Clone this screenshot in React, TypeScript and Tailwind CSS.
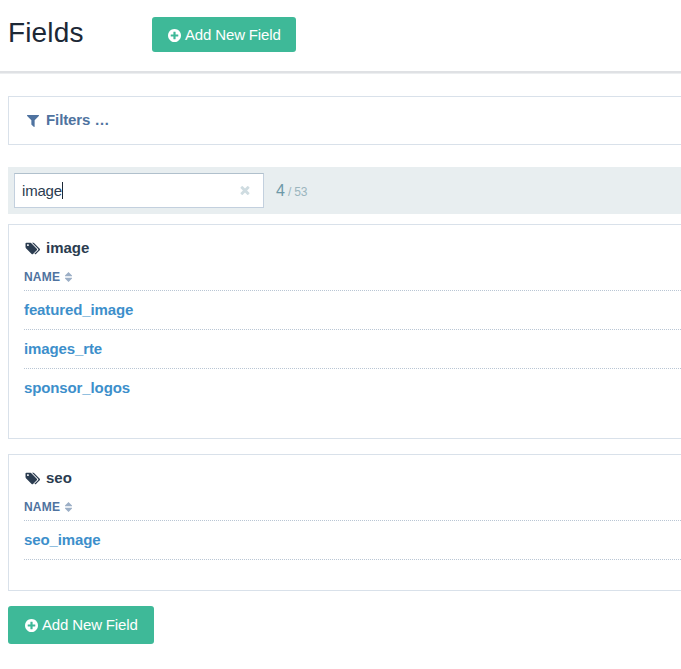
import React from "react";

const PLUS_CIRCLE =
  "M1344 960v-128q0-26-19-45t-45-19h-256v-256q0-26-19-45t-45-19h-128q-26 0-45 19t-19 45v256h-256q-26 0-45 19t-19 45v128q0 26 19 45t45 19h256v256q0 26 19 45t45 19h128q26 0 45-19t19-45v-256h256q26 0 45-19t19-45zm320-64q0 209-103 385.5t-279.5 279.5-385.5 103-385.5-103-279.5-279.5-103-385.5 103-385.5 279.5-279.5 385.5-103 385.5 103 279.5 279.5 103 385.5z";
const TIMES =
  "M1490 1322q0 40-28 68l-136 136q-28 28-68 28t-68-28l-294-294-294 294q-28 28-68 28t-68-28l-136-136q-28-28-28-68t28-68l294-294-294-294q-28-28-28-68t28-68l136-136q28-28 68-28t68 28l294 294 294-294q28-28 68-28t68 28l136 136q28 28 28 68t-28 68l-294 294 294 294q28 28 28 68z";
const FILTER =
  "M1595 295q17 41-14 70l-493 493v742q0 42-39 59-13 5-25 5-27 0-45-19l-256-256q-19-19-19-45v-486l-493-493q-31-29-14-70 17-39 59-39h1280q42 0 59 39z";
const TAGS =
  "M576 448q0-53-37.5-90.5t-90.5-37.5-90.5 37.5-37.5 90.5 37.5 90.5 90.5 37.5 90.5-37.5 37.5-90.5zm1067 576q0 53-37 90l-491 492q-39 37-91 37-53 0-90-37l-715-716q-38-37-64.5-101t-26.5-117v-416q0-52 38-90t90-38h416q53 0 117 26.5t102 64.5l715 714q37 39 37 91zm384 0q0 53-37 90l-491 492q-39 37-91 37-36 0-59-14t-53-45l470-470q37-37 37-90 0-52-37-91l-715-714q-38-38-102-64.5t-117-26.5h224q53 0 117 26.5t102 64.5l715 714q37 39 37 91z";

function Icon({ d, box, className }: { d: string; box: string; className: string }) {
  return (
    <svg viewBox={box} className={`shrink-0 ${className}`} fill="currentColor" aria-hidden="true">
      <path d={d} />
    </svg>
  );
}

function AddButton({ className }: { className: string }) {
  return (
    <button className={`flex items-center rounded-[3px] bg-[#3eb998] text-[15px] leading-[18px] text-white ${className}`}>
      <Icon d={PLUS_CIRCLE} box="128 128 1536 1536" className="mr-[4px] mt-px size-[13px]" />
      <span className="tracking-[-0.15px] whitespace-nowrap">Add New Field</span>
    </button>
  );
}

function FieldGroup({ tag, fields, className }: { tag: string; fields: string[]; className: string }) {
  return (
    <section className={`border-y border-l border-[#d9e1ea] pl-[15px] ${className}`}>
      <h2 className="flex h-[18px] items-center text-[15px] leading-[18px] font-bold text-[#2b3c50]">
        <Icon d={TAGS} box="64 128 1963 1536" className="mr-[6px] ml-px h-[13px] w-[15px]" />
        {tag}
      </h2>
      <div className="mt-[8px] flex h-[26px] items-center border-b border-dotted border-[#b9c6d4] pb-px text-[12px] font-bold tracking-[0.2px] text-[#4f73a0]">
        NAME
        <svg viewBox="0 0 7 10" className="ml-[5px] h-[10px] w-[7px]" fill="#9cafc6" aria-hidden="true">
          <path d="M3.5 0 7 3.6v.6H0v-.6zM0 5.8h7v.6L3.5 10 0 6.4z" />
        </svg>
      </div>
      {fields.map((field) => (
        <div
          key={field}
          className="flex h-[39px] items-center border-b border-dotted border-[#b9c6d4] text-[15px] font-bold tracking-[-0.12px] text-[#3d8fcb] last:[&:nth-child(5)]:border-transparent"
        >
          <a>{field}</a>
        </div>
      ))}
    </section>
  );
}

export default function App() {
  return (
    <main className="h-[669px] w-full overflow-hidden bg-white font-['Liberation_Sans',Arial,sans-serif]">
      <header className="border-b border-[#eceef0]">
        <div className="flex h-[73px] items-start border-b-2 border-[#dfe1e4] pl-[8px]">
          <h1 className="mt-[16px] w-[144px] text-[28px] leading-[34px] tracking-[0.15px] text-[#1c2836]">Fields</h1>
          <AddButton className="mt-[17px] h-[35px] w-[144px] pl-[16px]" />
        </div>
      </header>

      <div className="pl-[8px]">
        <section className="mt-[22px] flex h-[49px] items-center border-y border-l border-[#d9e1ea] pl-[18px] text-[15px] font-bold text-[#4f73a0]">
          <Icon d={FILTER} box="192 256 1408 1408" className="mt-px mr-[7px] size-[12px]" />
          <span className="tracking-[-0.1px]">Filters …</span>
        </section>

        <section className="mt-[22px] flex h-[47px] items-center bg-[#e8eef0] pl-[6px]">
          <div className="flex h-[35px] w-[250px] items-center border border-[#c3d0de] border-t-[#b0c0cc] bg-white pl-[7px] text-[15px] text-[#2b3c50]">
            <span className="pt-px tracking-[-0.2px]">image</span>
            <span className="h-[17px] w-px bg-[#1c2836]" />
            <Icon d={TIMES} box="302 238 1188 1316" className="mr-[13px] mb-px ml-auto h-[10px] w-[10px] text-[#cfdce1]" />
          </div>
          <div className="ml-[12px] flex items-baseline text-[#6c98a7]">
            <span className="text-[16px]">4</span>
            <span className="ml-[3px] text-[12px] tracking-[-0.15px] text-[#9bb5be]">/ 53</span>
          </div>
        </section>

        <FieldGroup
          tag="image"
          fields={["featured_image", "images_rte", "sponsor_logos"]}
          className="mt-[10px] h-[215px] pt-[14px]"
        />
        <FieldGroup tag="seo" fields={["seo_image"]} className="mt-[15px] h-[137px] pt-[14px]" />
        <AddButton className="mt-[15px] h-[38px] w-[146px] pl-[17px]" />
      </div>
    </main>
  );
}
